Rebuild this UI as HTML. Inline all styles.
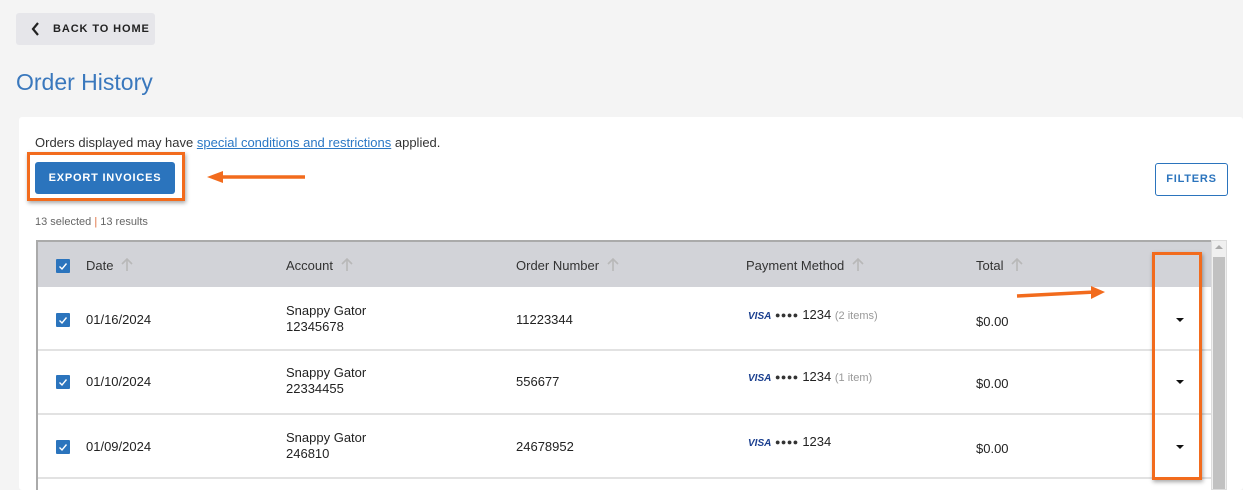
<!DOCTYPE html>
<html><head><style>
*{box-sizing:border-box;margin:0;padding:0}
body{width:1243px;height:490px;overflow:hidden;background:#f4f4f4;font-family:"Liberation Sans",sans-serif;color:#222;position:relative}
.abs{position:absolute}
.back{left:16px;top:13px;width:139px;height:32px;background:#e6e6ea;border-radius:3px;font-size:11px;font-weight:bold;letter-spacing:.9px;color:#222;padding:10px 0 0 37px}
h1{left:16px;top:69px;font-size:23px;font-weight:normal;color:#3a78bd}
.card{left:19px;top:117px;width:1224px;height:373px;background:#fff;border-radius:3px}
.note{left:35px;top:135px;font-size:13px;color:#333}
.note a{color:#2b78c5;text-decoration:underline}
.exp{left:35px;top:162px;width:140px;height:32px;background:#2b74bd;border-radius:3px;color:#fff;font-size:11px;font-weight:bold;letter-spacing:.8px;text-align:center;line-height:32px}
.obox{border:3px solid #f26b1d;box-shadow:1px 2px 4px rgba(0,0,0,.35)}
.filt{left:1155px;top:163px;width:73px;height:33px;border:1px solid #2b74bd;border-radius:3px;color:#2b74bd;font-size:11px;font-weight:bold;letter-spacing:.8px;text-align:center;line-height:31px}
.cnt{left:35px;top:216px;font-size:11px;color:#666}
.tbl{left:36px;top:240px;width:1175px;height:250px;border-left:2px solid #aaa;border-top:2px solid #aaa;background:#fff}
.hdr{left:0;top:0;width:1175px;height:45px;background:#d2d3d8}
.row{left:0;width:1175px;height:64px;border-bottom:2px solid #e2e2e2}
.cb{width:14px;height:14px;background:#2b74bd;border-radius:1px}
.cb svg{display:block}
.t{font-size:13px;color:#222;white-space:nowrap}
.h{font-size:13px;color:#333}
.h svg{margin-left:8px;vertical-align:-1px}
.sb{left:1211px;top:240px;width:16px;height:250px;background:#f0f0f0;border:1px solid #ddd}
.car{width:0;height:0;border-left:4px solid transparent;border-right:4px solid transparent;border-top:4px solid #111}
.visa{font-style:italic;font-weight:bold;color:#1a3f8f;font-size:10px}
.dots{font-size:9px;letter-spacing:.5px;color:#333;vertical-align:1px}
.gray{color:#999;font-size:11px}
</style></head><body>
<div class="abs back"><svg class="abs" style="left:15px;top:9px" width="9" height="14"><path d="M7 1L2 7L7 13" stroke="#222" stroke-width="2.2" fill="none"/></svg>BACK TO HOME</div>
<h1 class="abs">Order History</h1>
<div class="abs card"></div>
<div class="abs note">Orders displayed may have <a>special conditions and restrictions</a> applied.</div>
<div class="abs exp">EXPORT INVOICES</div>
<div class="abs obox" style="left:27px;top:152px;width:158px;height:49px"></div>
<svg class="abs" style="left:205px;top:168px" width="102" height="18"><path d="M100 9H15" stroke="#f26b1d" stroke-width="3.5"/><path d="M2 9L18 3V15Z" fill="#f26b1d"/></svg>
<div class="abs filt">FILTERS</div>
<div class="abs cnt">13 selected <span style="color:#e07040">|</span> 13 results</div>
<div class="abs tbl">
 <div class="abs hdr">
  <div class="abs cb" style="left:18px;top:17px"><svg width="14" height="14"><path d="M3.5 7.5L6 10L10.5 4.5" stroke="#fff" stroke-width="1.4" fill="none"/></svg></div>
  <div class="abs h" style="left:48px;top:15px">Date<svg width="12" height="14"><path d="M6 14V2M1 7L6 2L11 7" stroke="#b8b8b8" stroke-width="1.6" fill="none"/></svg></div>
  <div class="abs h" style="left:248px;top:15px">Account<svg width="12" height="14"><path d="M6 14V2M1 7L6 2L11 7" stroke="#b8b8b8" stroke-width="1.6" fill="none"/></svg></div>
  <div class="abs h" style="left:478px;top:15px">Order Number<svg width="12" height="14"><path d="M6 14V2M1 7L6 2L11 7" stroke="#b8b8b8" stroke-width="1.6" fill="none"/></svg></div>
  <div class="abs h" style="left:708px;top:15px">Payment Method<svg width="12" height="14"><path d="M6 14V2M1 7L6 2L11 7" stroke="#b8b8b8" stroke-width="1.6" fill="none"/></svg></div>
  <div class="abs h" style="left:938px;top:15px">Total<svg width="12" height="14"><path d="M6 14V2M1 7L6 2L11 7" stroke="#b8b8b8" stroke-width="1.6" fill="none"/></svg></div>
 </div>
 <div class="abs row" style="top:45px">
  <div class="abs cb" style="left:18px;top:26px"><svg width="14" height="14"><path d="M3.5 7.5L6 10L10.5 4.5" stroke="#fff" stroke-width="1.4" fill="none"/></svg></div>
  <div class="abs t" style="left:48px;top:25px">01/16/2024</div>
  <div class="abs t" style="left:248px;top:16px;line-height:16px">Snappy Gator<br>12345678</div>
  <div class="abs t" style="left:478px;top:25px">11223344</div>
  <div class="abs t" style="left:710px;top:20px"><span class="visa">VISA</span> <span class="dots">●●●●</span> 1234 <span class="gray">(2 items)</span></div>
  <div class="abs t" style="left:938px;top:27px">$0.00</div>
  <div class="abs car" style="left:1138px;top:31px"></div>
 </div>
 <div class="abs row" style="top:109px">
  <div class="abs cb" style="left:18px;top:24px"><svg width="14" height="14"><path d="M3.5 7.5L6 10L10.5 4.5" stroke="#fff" stroke-width="1.4" fill="none"/></svg></div>
  <div class="abs t" style="left:48px;top:23px">01/10/2024</div>
  <div class="abs t" style="left:248px;top:14px;line-height:16px">Snappy Gator<br>22334455</div>
  <div class="abs t" style="left:478px;top:23px">556677</div>
  <div class="abs t" style="left:710px;top:18px"><span class="visa">VISA</span> <span class="dots">●●●●</span> 1234 <span class="gray">(1 item)</span></div>
  <div class="abs t" style="left:938px;top:25px">$0.00</div>
  <div class="abs car" style="left:1138px;top:29px"></div>
 </div>
 <div class="abs row" style="top:173px">
  <div class="abs cb" style="left:18px;top:25px"><svg width="14" height="14"><path d="M3.5 7.5L6 10L10.5 4.5" stroke="#fff" stroke-width="1.4" fill="none"/></svg></div>
  <div class="abs t" style="left:48px;top:24px">01/09/2024</div>
  <div class="abs t" style="left:248px;top:15px;line-height:16px">Snappy Gator<br>246810</div>
  <div class="abs t" style="left:478px;top:24px">24678952</div>
  <div class="abs t" style="left:710px;top:19px"><span class="visa">VISA</span> <span class="dots">●●●●</span> 1234</div>
  <div class="abs t" style="left:938px;top:26px">$0.00</div>
  <div class="abs car" style="left:1138px;top:30px"></div>
 </div>
</div>
<div class="abs sb"><div class="abs" style="left:3px;top:4px;border-left:4px solid transparent;border-right:4px solid transparent;border-bottom:4px solid #aaa"></div><div class="abs" style="left:1px;top:16px;width:12px;height:232px;background:#c1c1c1"></div></div>
<div class="abs obox" style="left:1152px;top:252px;width:50px;height:228px"></div>
<svg class="abs" style="left:1015px;top:285px" width="92" height="18"><path d="M2 11L80 7" stroke="#f26b1d" stroke-width="3.5"/><path d="M90 7L76 1V14Z" fill="#f26b1d"/></svg>
</body></html>
